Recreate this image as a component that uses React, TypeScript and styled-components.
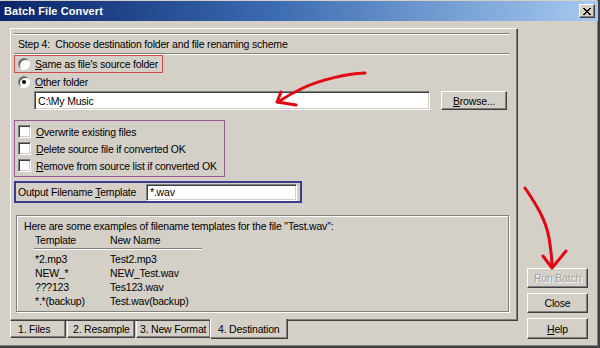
import React from 'react';
import styled, { createGlobalStyle, css } from 'styled-components';

const Global = createGlobalStyle`
  html, body { margin: 0; padding: 0; background: #d4d0c8; }
  body { font-family: "Liberation Sans", Arial, sans-serif; font-size: 10.5px; letter-spacing: -0.2px; color: #000; }
  #root { width: 600px; height: 348px; }
  * { box-sizing: border-box; }
`;

const sunken = css`
  border: 1px solid;
  border-color: #808080 #ffffff #ffffff #808080;
  box-shadow: inset 1px 1px 0 #404040, inset -1px -1px 0 #d4d0c8;
  background: #ffffff;
`;

const raised = css`
  border: 1px solid;
  border-color: #ffffff #404040 #404040 #ffffff;
  box-shadow: inset -1px -1px 0 #808080;
  background: #d4d0c8;
`;

const Window = styled.div`
  position: relative;
  width: 600px;
  height: 348px;
  background: #d4d0c8;
  display: flex;
  flex-direction: column;
  border-right: 2px solid #404040;
  border-bottom: 2px solid #404040;
  box-shadow: inset -1px -1px 0 #808080;
  overflow: hidden;
`;

const TitleBar = styled.div`
  height: 20px;
  margin-top: 1px;
  display: flex;
  align-items: center;
  justify-content: space-between;
  padding: 0 3px 0 4px;
  background: linear-gradient(to right, #0a246a 0%, #3a6ab0 45%, #a6caf0 100%);
`;

const Title = styled.span`
  color: #ffffff;
  font-weight: bold;
  font-size: 11px;
  letter-spacing: 0.1px;
`;

const CloseBtn = styled.div`
  ${raised};
  width: 16px;
  height: 14px;
  display: flex;
  align-items: center;
  justify-content: center;
`;

const Body = styled.div`
  flex: 1;
  display: flex;
  padding: 7px 0 0 10px;
`;

const LeftCol = styled.div`
  width: 508px;
  display: flex;
  flex-direction: column;
`;

const Panel = styled.div`
  position: relative;
  height: 293px;
  border: 1px solid;
  border-color: #ffffff #404040 #404040 #ffffff;
  box-shadow: inset -1px -1px 0 #808080;
  padding: 4px 0 0 3px;
  display: flex;
  flex-direction: column;
`;

const Header = styled.div`
  height: 21px;
  margin-right: 8px;
  border-top: 1px solid #808080;
  border-bottom: 1px solid #808080;
  box-shadow: inset 0 1px 0 #ffffff, 0 1px 0 #ffffff;
  display: flex;
  align-items: center;
  padding-left: 4px;
  white-space: pre;
`;

const OptionBox = styled.div<{ $color: string; $w: number; $bw?: number }>`
  width: ${p => p.$w}px;
  border: ${p => p.$bw ?? 1}px solid ${p => p.$color};
`;

const Row = styled.div<{ $h?: number; $pl?: number }>`
  height: ${p => p.$h ?? 17}px;
  display: flex;
  align-items: center;
  padding-left: ${p => p.$pl ?? 3}px;
  white-space: nowrap;
`;

const Radio = styled.span<{ $on?: boolean }>`
  width: 12px;
  height: 12px;
  border-radius: 50%;
  background: #ffffff;
  border: 1px solid;
  border-color: #808080 #ffffff #ffffff #808080;
  box-shadow: inset 1px 1px 0 #404040;
  display: flex;
  align-items: center;
  justify-content: center;
  flex: none;
  &::after {
    content: '';
    display: ${p => (p.$on ? 'block' : 'none')};
    width: 4px;
    height: 4px;
    border-radius: 50%;
    background: #000;
  }
`;

const Check = styled.span`
  ${sunken};
  width: 13px;
  height: 13px;
  flex: none;
`;

const Label = styled.span<{ $ml?: number }>`
  margin-left: ${p => p.$ml ?? 5}px;
  white-space: nowrap;
`;

const FolderRow = styled.div`
  display: flex;
  align-items: center;
  margin: 1px 0 0 20px;
  gap: 11px;
`;

const TextInput = styled.div<{ $w: number; $h?: number }>`
  ${sunken};
  width: ${p => p.$w}px;
  height: ${p => p.$h ?? 19}px;
  display: flex;
  align-items: center;
  padding-left: 3px;
  white-space: nowrap;
`;

const Button = styled.div<{ $w: number; $h?: number; $disabled?: boolean }>`
  ${raised};
  width: ${p => p.$w}px;
  height: ${p => p.$h ?? 20}px;
  display: flex;
  align-items: center;
  justify-content: center;
  color: ${p => (p.$disabled ? '#a0a0a0' : '#000')};
  text-shadow: ${p => (p.$disabled ? '1px 1px 0 #ffffff' : 'none')};
`;

const ChecksBox = styled(OptionBox)`
  margin-top: 10px;
  padding: 2px 0 2px 1px;
`;

const TemplateBox = styled(OptionBox)`
  margin-top: 4px;
  height: 22px;
  display: flex;
  align-items: center;
  padding-left: 1px;
  justify-content: space-between;
  padding-right: 3px;
`;

const Group = styled.div`
  margin: 12px 8px 0 2px;
  height: 97px;
  border: 1px solid #808080;
  box-shadow: inset 1px 1px 0 #ffffff, 1px 1px 0 #ffffff;
  padding: 4px 0 0 7px;
`;

const Table = styled.div`
  display: grid;
  grid-template-columns: 75px 92px;
  margin: 1px 0 0 11px;
  width: 167px;
`;

const Cell = styled.div`
  height: 14px;
  line-height: 14px;
  white-space: nowrap;
`;

const HeadRule = styled.div`
  grid-column: 1 / 3;
  height: 2px;
  margin: 1px 0 2px -1px;
  border-top: 1px solid #808080;
  border-bottom: 1px solid #ffffff;
`;

const TabStrip = styled.div`
  display: flex;
  align-items: flex-start;
`;

const Tab = styled.div<{ $active?: boolean; $w: number; $pl: number }>`
  position: relative;
  width: ${p => p.$w}px;
  height: ${p => (p.$active ? 20 : 17)}px;
  margin-top: ${p => (p.$active ? -2 : 0)}px;
  margin-left: ${p => (p.$active ? -1 : 1)}px;
  padding: ${p => (p.$active ? 4 : 2)}px 0 0 ${p => p.$pl}px;
  background: #d4d0c8;
  border-left: 1px solid #ffffff;
  border-right: 1px solid #404040;
  border-bottom: 1px solid #404040;
  box-shadow: inset -1px -1px 0 #808080;
  white-space: nowrap;
  z-index: ${p => (p.$active ? 2 : 0)};
  &:first-child { margin-left: 0; }
`;

const RightCol = styled.div`
  flex: 1;
  display: flex;
  flex-direction: column;
  justify-content: flex-end;
  padding: 0 0 7px 9px;
  gap: 5px;
`;

const Overlay = styled.svg`
  position: absolute;
  inset: 0;
  pointer-events: none;
`;

const U = styled.u`
  text-decoration: underline;
  text-underline-offset: 1px;
`;

const rows: [string, string][] = [
  ['*2.mp3', 'Test2.mp3'],
  ['NEW_*', 'NEW_Test.wav'],
  ['???123', 'Tes123.wav'],
  ['*.*(backup)', 'Test.wav(backup)'],
];

export default function App() {
  return (
    <>
      <Global />
      <Window>
        <TitleBar>
          <Title>Batch File Convert</Title>
          <CloseBtn>
            <svg width="8" height="7" viewBox="0 0 8 7">
              <path d="M0 0 L7 7 M1 0 L8 7 M7 0 L0 7 M8 0 L1 7" stroke="#000" strokeWidth="1" />
            </svg>
          </CloseBtn>
        </TitleBar>
        <Body>
          <LeftCol>
            <Panel>
              <Header>Step 4:  Choose destination folder and file renaming scheme</Header>
              <OptionBox $color="#d4494a" $w={149} style={{ marginTop: 1 }}>
                <Row $h={16}>
                  <Radio />
                  <Label><U>S</U>ame as file's source folder</Label>
                </Row>
              </OptionBox>
              <Row $pl={4}>
                <Radio $on />
                <Label><U>O</U>ther folder</Label>
              </Row>
              <FolderRow>
                <TextInput $w={396}>C:\My Music</TextInput>
                <Button $w={66} $h={19}><span><U>B</U>rowse...</span></Button>
              </FolderRow>
              <ChecksBox $color="#9c5a96" $w={211} $bw={1}>
                <Row $pl={2}>
                  <Check />
                  <Label><U>O</U>verwrite existing files</Label>
                </Row>
                <Row $pl={2}>
                  <Check />
                  <Label><U>D</U>elete source file if converted OK</Label>
                </Row>
                <Row $pl={2}>
                  <Check />
                  <Label><U>R</U>emove from source list if converted OK</Label>
                </Row>
              </ChecksBox>
              <TemplateBox $color="#3c3c8c" $w={288} $bw={2}>
                <Label $ml={1}>Output Filename <U>T</U>emplate</Label>
                <TextInput $w={151} $h={17}>*.wav</TextInput>
              </TemplateBox>
              <Group>
                <div>Here are some examples of filename templates for the file "Test.wav":</div>
                <Table>
                  <Cell>Template</Cell>
                  <Cell>New Name</Cell>
                  <HeadRule />
                  {rows.map(([a, b]) => (
                    <React.Fragment key={a}>
                      <Cell>{a}</Cell>
                      <Cell>{b}</Cell>
                    </React.Fragment>
                  ))}
                </Table>
              </Group>
            </Panel>
            <TabStrip>
              <Tab $w={56} $pl={7}>1. Files</Tab>
              <Tab $w={68} $pl={5}>2. Resample</Tab>
              <Tab $w={75} $pl={3}>3. New Format</Tab>
              <Tab $w={78} $pl={7} $active>4. Destination</Tab>
            </TabStrip>
          </LeftCol>
          <RightCol>
            <Button $w={61} $h={20} $disabled>Run Batch</Button>
            <Button $w={61} $h={20}>Close</Button>
            <Button $w={61} $h={21}><span><U>H</U>elp</span></Button>
          </RightCol>
        </Body>
        <Overlay width="600" height="348" viewBox="0 0 600 348">
          <g fill="none" stroke="#e30613" strokeWidth="3" strokeLinecap="round" strokeLinejoin="round">
            <path d="M365 73 C345 74 320 80 303 88 C292 93 284 98 278 102" />
            <path d="M281 92 L277 102 L296 105" />
            <path d="M525 188 C536 204 546 220 549 238 C551 250 552 258 552 267" />
            <path d="M543 256 L552 268 L566 251" />
          </g>
        </Overlay>
      </Window>
    </>
  );
}
